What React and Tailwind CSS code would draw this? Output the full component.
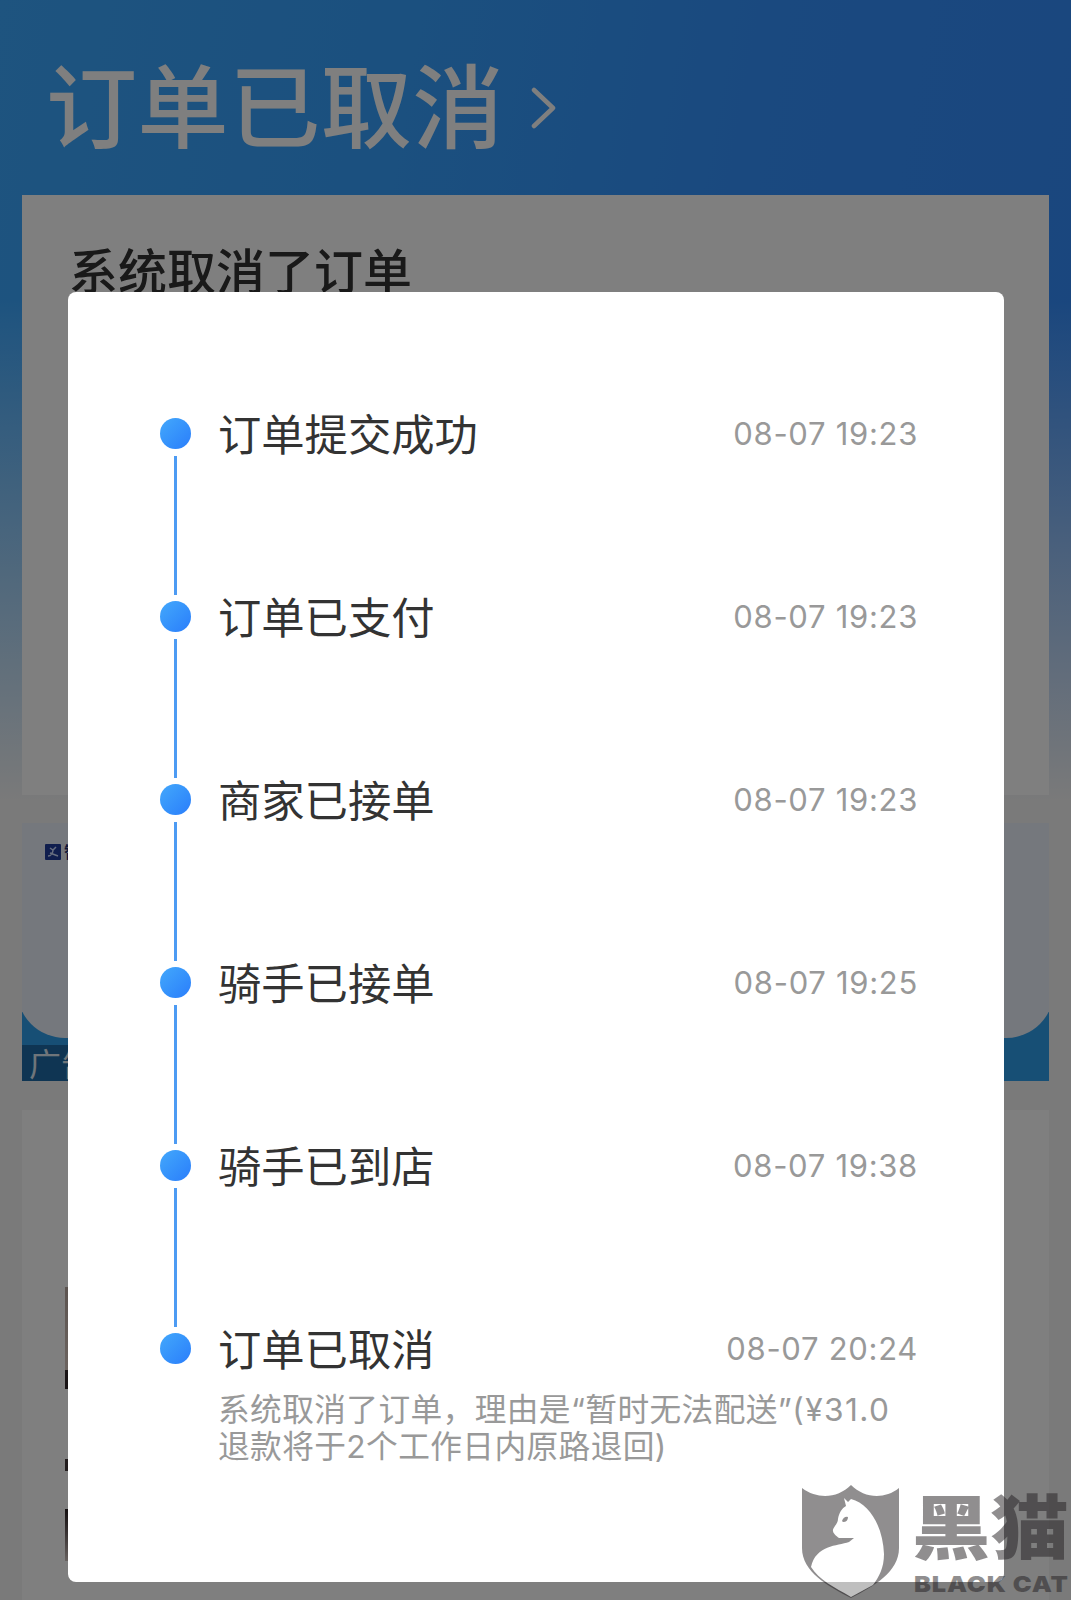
import clsx from 'clsx';

const STEPS = [
  { title: '订单提交成功', time: '08-07 19:23' },
  { title: '订单已支付', time: '08-07 19:23' },
  { title: '商家已接单', time: '08-07 19:23' },
  { title: '骑手已接单', time: '08-07 19:25' },
  { title: '骑手已到店', time: '08-07 19:38' },
  {
    title: '订单已取消',
    time: '08-07 20:24',
    reason: '系统取消了订单，理由是“暂时无法配送”',
    amount: '(¥31.0',
    refund: '退款将于2个工作日内原路退回)',
  },
];

function OrderPage() {
  return (
    <div className="h-[1600px] bg-[#f4f4f4] overflow-hidden">
      <div className="h-[800px] bg-[linear-gradient(to_bottom,transparent_0px,transparent_300px,#f4f4f480_550px,#f4f4f4_800px),linear-gradient(100deg,#3ca8ff_0%,#36a0ff_35%,#3492ff_65%,#348cfc_100%)]">
        <header className="h-[195px] flex items-center pl-[46px] pt-[21px] gap-[27px] text-white">
          <h1 className="text-[91px] leading-none font-medium tracking-[0.6px]">订单已取消</h1>
          <svg width="26" height="42" viewBox="0 0 26 42" fill="none" stroke="currentColor" strokeWidth="4.5" strokeLinecap="round" strokeLinejoin="round">
            <path d="M3 3 L22 21 L3 39" />
          </svg>
        </header>
        <section className="mx-[22px] h-[600px] bg-white px-[47px] pt-[53px]">
          <h2 className="text-[49px] leading-none font-medium text-[#333]">系统取消了订单</h2>
        </section>
      </div>

      {/* 广告 */}
      <section className="mx-[22px] mt-[23px] h-[258px] bg-[#2f9fea] overflow-hidden flex flex-col">
        <div className="-mx-[5px] h-[215px] shrink-0 bg-[#eaf0fa] rounded-b-[48px] pl-[28px] pt-[21px] flex items-start gap-[3px]">
          <svg width="16" height="16" viewBox="0 0 16 16">
            <rect width="16" height="16" rx="1" fill="#203c9c" />
            <path d="M5 4L8 6L11 3M8 6C8 9 6 12 3 12M5 9L13 12" fill="none" stroke="#cfdcff" strokeWidth="1.5" />
          </svg>
          <span className="text-base leading-none font-bold text-[#1c2c70]">智能</span>
        </div>
        <span className="mt-auto w-[90px] h-[36px] bg-[#1f6ba6] pl-[7px] pt-[4px] text-[32px] leading-none text-[#dfeaf5]">广告</span>
      </section>

      {/* 商品列表 */}
      <section className="mx-[22px] mt-[29px] h-[500px] bg-white pl-[43px] pt-[177px]">
        <div className="w-20 h-[83px] bg-linear-to-b from-[#b8a8a0] to-[#d8c8c0]" />
        <div className="w-20 h-[19px] bg-[#33282a]" />
        <div className="mt-[70px] w-20 h-[12px] bg-[#44383a]" />
        <div className="mt-[38px] w-20 h-[52px] bg-linear-to-b from-[#2a2022] to-[#d0c4c0]" />
      </section>
    </div>
  );
}

function Step({ step, last }) {
  return (
    <li className="flex h-[183px]">
      <div className="w-8 flex flex-col items-center">
        <span className="size-[31px] shrink-0 rounded-full bg-linear-to-br from-[#44a8fb] to-[#2b7dfb]" />
        <span className={clsx('mt-[7px] w-[3px] h-[139px] bg-[#4d9bf3]', last && 'hidden')} />
      </div>
      <div className="flex-1 ml-[27px] -mt-[6px]">
        <div className="flex items-center justify-between h-[44px]">
          <h3 className="pt-1 text-[43.3px] leading-none text-[#333]">{step.title}</h3>
          <time className="pb-0.5 text-[31px] leading-none tracking-[0.7px] text-[#999]">{step.time}</time>
        </div>
        {step.reason && (
          <p className="mt-[20px] text-[31.7px] leading-[37px] tracking-[0.4px] text-[#999] whitespace-nowrap">
            {step.reason}
            <span className="tracking-[1.4px]">{step.amount}</span>
            <br />
            {step.refund}
          </p>
        )}
      </div>
    </li>
  );
}

function Watermark() {
  return (
    <div className="absolute left-[802px] top-[1484px] flex opacity-50 text-[#231f22]">
      <svg width="98" height="115" viewBox="0 0 98 115">
        <path d="M0 4C16 16 36 14 49 1C62 14 82 16 97 4V64C97 88 72 102 49 114C26 102 0 88 0 64Z" fill="currentColor" />
        <path d="M42 14L46 18L49 15C68 20 81 43 82 70C82 84 77 93 71 101L49 113C32 103 17 96 9 83C14 61 35 62 47 58L52 54H37C34 52 31 49 31 47C30 44 36 40 36 35C37 29 40 24 44 22Z" fill="#fff" />
        <path d="M40 37Q42 32 46 33Q46 38 41 38Z" fill="currentColor" />
      </svg>
      <div className="ml-[14px] pt-[10px] w-[156px]">
        <p className="-ml-[2px] text-[70px] leading-[70px] font-black whitespace-nowrap origin-left scale-x-[1.12]">黑猫</p>
        <p className="mt-[9px] text-[22px] leading-[22px] font-black tracking-[0.8px] whitespace-nowrap origin-left scale-x-[1.15]">BLACK CAT</p>
      </div>
    </div>
  );
}

export default function App() {
  return (
    <div className="relative w-[1071px] h-[1600px] overflow-hidden font-[Inter,'Noto_Sans_CJK_SC',sans-serif]">
      <OrderPage />
      <div className="absolute inset-0 bg-black/50 pt-[292px] pl-[68px]">
        <ul className="w-[936px] h-[1290px] rounded-lg bg-white pt-[126px] pl-[91px] pr-[86px]">
          {STEPS.map((step, i) => (
            <Step key={step.title} step={step} last={i === STEPS.length - 1} />
          ))}
        </ul>
      </div>
      <Watermark />
    </div>
  );
}
